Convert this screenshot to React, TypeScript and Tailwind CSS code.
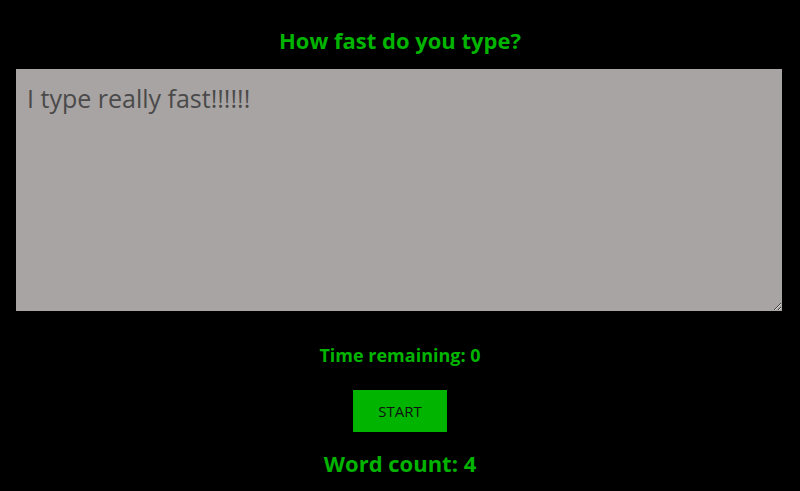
export default function App() {
  return (
    <div className="min-h-[491px] w-full bg-black flex flex-col items-center" style={{ fontFamily: '"Comic Sans MS", "Open Sans", sans-serif' }}>
      <h1 className="mt-[24px] h-[32px] text-[22px] font-bold leading-[32px] text-[#00b400]">How fast do you type?</h1>
      <textarea
        className="mt-[13px] self-start ml-[16px] w-[766px] h-[242px] bg-[#a8a4a3] text-[#4a4a4a] text-[25px] leading-[30px] px-[11px] py-[14px] outline-none resize"
        defaultValue="I type really fast!!!!!!"
        style={{ fontFamily: '"Comic Sans MS", "Open Sans", sans-serif' }}
      />
      <h4 className="mt-[31px] h-[26px] text-[18px] font-bold leading-[26px] text-[#00b400]">Time remaining: 0</h4>
      <button className="mt-[22px] w-[94px] h-[42px] bg-[#00b400] text-[15px] text-[#111]">START</button>
      <h2 className="mt-[16px] text-[22px] font-bold leading-[30px] text-[#00b400]">Word count: 4</h2>
    </div>
  );
}
